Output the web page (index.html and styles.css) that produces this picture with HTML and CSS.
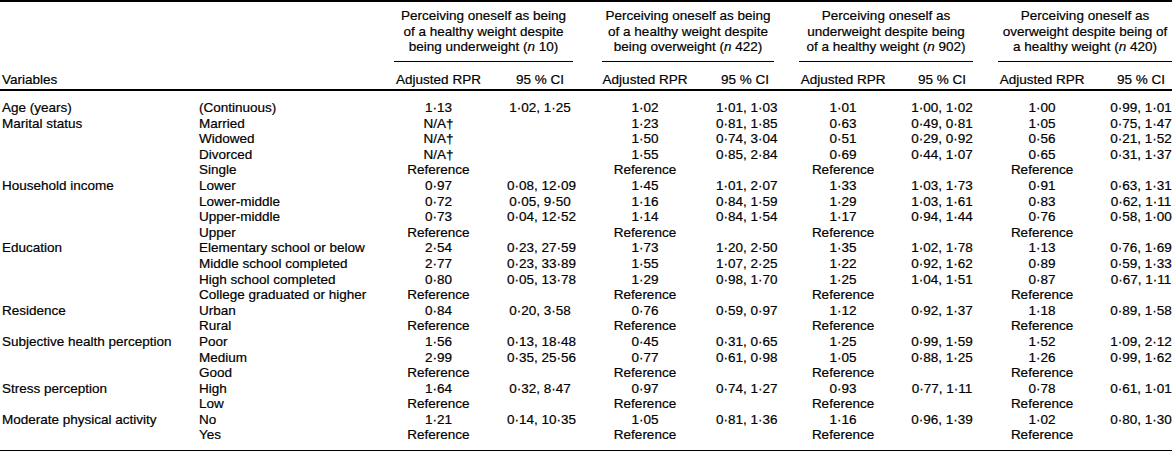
FILE: index.html
```html
<!DOCTYPE html>
<html lang="en">
<head>
<meta charset="utf-8">
<title>Adjusted RPR table</title>
<link rel="stylesheet" href="styles.css">
</head>
<body>
<table class="tbl">
  <colgroup>
    <col class="w-var"><col class="w-cat">
    <col class="w-r1"><col class="w-c1"><col class="w-g1">
    <col class="w-r2"><col class="w-c2"><col class="w-g2">
    <col class="w-r3"><col class="w-c3"><col class="w-g3">
    <col class="w-r4"><col class="w-c4">
  </colgroup>
  <thead>
    <tr class="h1">
      <th class="var-h" rowspan="2">Variables</th>
      <th class="cat-h" rowspan="2"></th>
      <th class="grp" colspan="2">Perceiving oneself as being<br>of a healthy weight despite<br>being underweight (<i>n</i> 10)</th>
      <th class="gap"></th>
      <th class="grp" colspan="2">Perceiving oneself as being<br>of a healthy weight despite<br>being overweight (<i>n</i> 422)</th>
      <th class="gap"></th>
      <th class="grp" colspan="2">Perceiving oneself as<br>underweight despite being<br>of a healthy weight (<i>n</i> 902)</th>
      <th class="gap"></th>
      <th class="grp" colspan="2">Perceiving oneself as<br>overweight despite being of<br>a healthy weight (<i>n</i> 420)</th>
    </tr>
    <tr class="h2">
      <th class="rpr">Adjusted RPR</th><th class="ci">95 % CI</th><th class="gap"></th>
      <th class="rpr">Adjusted RPR</th><th class="ci ci2">95 % CI</th><th class="gap"></th>
      <th class="rpr">Adjusted RPR</th><th class="ci">95 % CI</th><th class="gap"></th>
      <th class="rpr">Adjusted RPR</th><th class="ci">95 % CI</th>
    </tr>
  </thead>
  <tbody>
    <tr class="first"><td class="var">Age (years)</td><td class="cat">(Continuous)</td><td class="rpr">1·13</td><td class="ci">1·02, 1·25</td><td></td><td class="rpr">1·02</td><td class="ci ci2">1·01, 1·03</td><td></td><td class="rpr">1·01</td><td class="ci">1·00, 1·02</td><td></td><td class="rpr">1·00</td><td class="ci">0·99, 1·01</td></tr>
    <tr><td class="var">Marital status</td><td class="cat">Married</td><td class="rpr">N/A†</td><td class="ci"></td><td></td><td class="rpr">1·23</td><td class="ci ci2">0·81, 1·85</td><td></td><td class="rpr">0·63</td><td class="ci">0·49, 0·81</td><td></td><td class="rpr">1·05</td><td class="ci">0·75, 1·47</td></tr>
    <tr><td class="var"></td><td class="cat">Widowed</td><td class="rpr">N/A†</td><td class="ci"></td><td></td><td class="rpr">1·50</td><td class="ci ci2">0·74, 3·04</td><td></td><td class="rpr">0·51</td><td class="ci">0·29, 0·92</td><td></td><td class="rpr">0·56</td><td class="ci">0·21, 1·52</td></tr>
    <tr><td class="var"></td><td class="cat">Divorced</td><td class="rpr">N/A†</td><td class="ci"></td><td></td><td class="rpr">1·55</td><td class="ci ci2">0·85, 2·84</td><td></td><td class="rpr">0·69</td><td class="ci">0·44, 1·07</td><td></td><td class="rpr">0·65</td><td class="ci">0·31, 1·37</td></tr>
    <tr><td class="var"></td><td class="cat">Single</td><td class="rpr">Reference</td><td class="ci"></td><td></td><td class="rpr">Reference</td><td class="ci ci2"></td><td></td><td class="rpr">Reference</td><td class="ci"></td><td></td><td class="rpr">Reference</td><td class="ci"></td></tr>
    <tr><td class="var">Household income</td><td class="cat">Lower</td><td class="rpr">0·97</td><td class="ci">0·08, 12·09</td><td></td><td class="rpr">1·45</td><td class="ci ci2">1·01, 2·07</td><td></td><td class="rpr">1·33</td><td class="ci">1·03, 1·73</td><td></td><td class="rpr">0·91</td><td class="ci">0·63, 1·31</td></tr>
    <tr><td class="var"></td><td class="cat">Lower-middle</td><td class="rpr">0·72</td><td class="ci">0·05, 9·50</td><td></td><td class="rpr">1·16</td><td class="ci ci2">0·84, 1·59</td><td></td><td class="rpr">1·29</td><td class="ci">1·03, 1·61</td><td></td><td class="rpr">0·83</td><td class="ci">0·62, 1·11</td></tr>
    <tr><td class="var"></td><td class="cat">Upper-middle</td><td class="rpr">0·73</td><td class="ci">0·04, 12·52</td><td></td><td class="rpr">1·14</td><td class="ci ci2">0·84, 1·54</td><td></td><td class="rpr">1·17</td><td class="ci">0·94, 1·44</td><td></td><td class="rpr">0·76</td><td class="ci">0·58, 1·00</td></tr>
    <tr><td class="var"></td><td class="cat">Upper</td><td class="rpr">Reference</td><td class="ci"></td><td></td><td class="rpr">Reference</td><td class="ci ci2"></td><td></td><td class="rpr">Reference</td><td class="ci"></td><td></td><td class="rpr">Reference</td><td class="ci"></td></tr>
    <tr><td class="var">Education</td><td class="cat">Elementary school or below</td><td class="rpr">2·54</td><td class="ci">0·23, 27·59</td><td></td><td class="rpr">1·73</td><td class="ci ci2">1·20, 2·50</td><td></td><td class="rpr">1·35</td><td class="ci">1·02, 1·78</td><td></td><td class="rpr">1·13</td><td class="ci">0·76, 1·69</td></tr>
    <tr><td class="var"></td><td class="cat">Middle school completed</td><td class="rpr">2·77</td><td class="ci">0·23, 33·89</td><td></td><td class="rpr">1·55</td><td class="ci ci2">1·07, 2·25</td><td></td><td class="rpr">1·22</td><td class="ci">0·92, 1·62</td><td></td><td class="rpr">0·89</td><td class="ci">0·59, 1·33</td></tr>
    <tr><td class="var"></td><td class="cat">High school completed</td><td class="rpr">0·80</td><td class="ci">0·05, 13·78</td><td></td><td class="rpr">1·29</td><td class="ci ci2">0·98, 1·70</td><td></td><td class="rpr">1·25</td><td class="ci">1·04, 1·51</td><td></td><td class="rpr">0·87</td><td class="ci">0·67, 1·11</td></tr>
    <tr><td class="var"></td><td class="cat">College graduated or higher</td><td class="rpr">Reference</td><td class="ci"></td><td></td><td class="rpr">Reference</td><td class="ci ci2"></td><td></td><td class="rpr">Reference</td><td class="ci"></td><td></td><td class="rpr">Reference</td><td class="ci"></td></tr>
    <tr><td class="var">Residence</td><td class="cat">Urban</td><td class="rpr">0·84</td><td class="ci">0·20, 3·58</td><td></td><td class="rpr">0·76</td><td class="ci ci2">0·59, 0·97</td><td></td><td class="rpr">1·12</td><td class="ci">0·92, 1·37</td><td></td><td class="rpr">1·18</td><td class="ci">0·89, 1·58</td></tr>
    <tr><td class="var"></td><td class="cat">Rural</td><td class="rpr">Reference</td><td class="ci"></td><td></td><td class="rpr">Reference</td><td class="ci ci2"></td><td></td><td class="rpr">Reference</td><td class="ci"></td><td></td><td class="rpr">Reference</td><td class="ci"></td></tr>
    <tr><td class="var">Subjective health perception</td><td class="cat">Poor</td><td class="rpr">1·56</td><td class="ci">0·13, 18·48</td><td></td><td class="rpr">0·45</td><td class="ci ci2">0·31, 0·65</td><td></td><td class="rpr">1·25</td><td class="ci">0·99, 1·59</td><td></td><td class="rpr">1·52</td><td class="ci">1·09, 2·12</td></tr>
    <tr><td class="var"></td><td class="cat">Medium</td><td class="rpr">2·99</td><td class="ci">0·35, 25·56</td><td></td><td class="rpr">0·77</td><td class="ci ci2">0·61, 0·98</td><td></td><td class="rpr">1·05</td><td class="ci">0·88, 1·25</td><td></td><td class="rpr">1·26</td><td class="ci">0·99, 1·62</td></tr>
    <tr><td class="var"></td><td class="cat">Good</td><td class="rpr">Reference</td><td class="ci"></td><td></td><td class="rpr">Reference</td><td class="ci ci2"></td><td></td><td class="rpr">Reference</td><td class="ci"></td><td></td><td class="rpr">Reference</td><td class="ci"></td></tr>
    <tr><td class="var">Stress perception</td><td class="cat">High</td><td class="rpr">1·64</td><td class="ci">0·32, 8·47</td><td></td><td class="rpr">0·97</td><td class="ci ci2">0·74, 1·27</td><td></td><td class="rpr">0·93</td><td class="ci">0·77, 1·11</td><td></td><td class="rpr">0·78</td><td class="ci">0·61, 1·01</td></tr>
    <tr><td class="var"></td><td class="cat">Low</td><td class="rpr">Reference</td><td class="ci"></td><td></td><td class="rpr">Reference</td><td class="ci ci2"></td><td></td><td class="rpr">Reference</td><td class="ci"></td><td></td><td class="rpr">Reference</td><td class="ci"></td></tr>
    <tr><td class="var">Moderate physical activity</td><td class="cat">No</td><td class="rpr">1·21</td><td class="ci">0·14, 10·35</td><td></td><td class="rpr">1·05</td><td class="ci ci2">0·81, 1·36</td><td></td><td class="rpr">1·16</td><td class="ci">0·96, 1·39</td><td></td><td class="rpr">1·02</td><td class="ci">0·80, 1·30</td></tr>
    <tr class="last"><td class="var"></td><td class="cat">Yes</td><td class="rpr">Reference</td><td class="ci"></td><td></td><td class="rpr">Reference</td><td class="ci ci2"></td><td></td><td class="rpr">Reference</td><td class="ci"></td><td></td><td class="rpr">Reference</td><td class="ci"></td></tr>
  </tbody>
</table>
</body>
</html>
```
FILE: styles.css
```css
html, body {
  margin: 0;
  padding: 0;
  background: #fff;
}

body {
  font-family: "Liberation Sans", Arial, Helvetica, sans-serif;
  font-size: 13.5px;
  color: #000;
  -webkit-text-stroke: 0.2px #000;
}

.tbl {
  width: 1172px;
  table-layout: fixed;
  border-collapse: separate;
  border-spacing: 0;
  border-top: 2px solid #000;
  border-bottom: 2px solid #000;
}

.w-var { width: 199px; }
.w-cat { width: 195px; }
.w-r1 { width: 89px; }
.w-c1 { width: 90px; }
.w-g1 { width: 29px; }
.w-r2 { width: 86px; }
.w-c2 { width: 86px; }
.w-g2 { width: 25px; }
.w-r3 { width: 88px; }
.w-c3 { width: 86px; }
.w-g3 { width: 25px; }
.w-r4 { width: 88px; }
.w-c4 { width: 86px; }

th, td {
  padding: 0;
  font-weight: normal;
  line-height: 15.6px;
  white-space: nowrap;
  vertical-align: bottom;
}

.h1 th {
  padding-top: 6px;
  padding-bottom: 6.5px;
  line-height: 15.5px;
}

.h1 .grp {
  text-align: center;
  border-bottom: 1px solid #000;
}

.h1 .var-h,
.h1 .cat-h {
  text-align: left;
  padding-bottom: 1px;
  border-bottom: 2px solid #000;
}

.var-h { padding-left: 2px; }

.h2 th {
  padding-top: 10px;
  padding-bottom: 1px;
  line-height: 15.5px;
  border-bottom: 2px solid #000;
}

.rpr { text-align: center; }

.ci {
  text-align: center;
  padding-left: 24px;
}

.ci2 { padding-left: 28px; }

.var {
  text-align: left;
  padding-left: 2px;
}

.cat { text-align: left; }

.first td { padding-top: 9.5px; }
.last td { padding-bottom: 6.5px; }
```
